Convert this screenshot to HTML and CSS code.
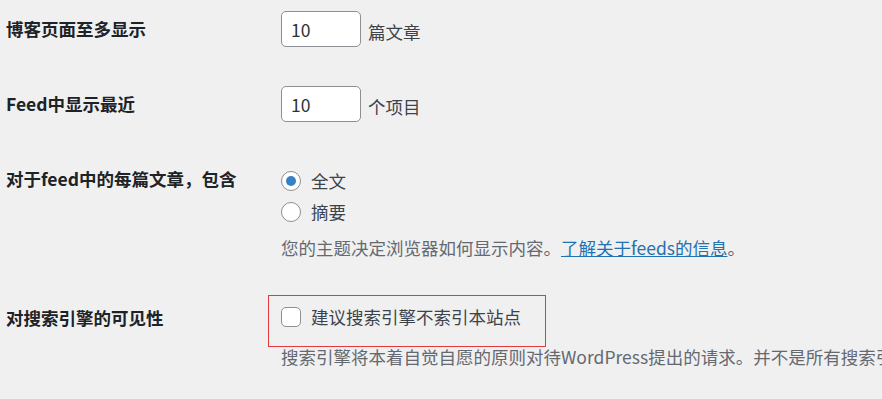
FILE: index.html
```html
<!DOCTYPE html>
<html lang="zh-CN">
<head>
<meta charset="utf-8">
<title>阅读设置</title>
<link rel="stylesheet" href="styles.css">
</head>
<body>
<div class="form">
  <div class="row row-short">
    <div class="th">博客页面至多显示</div>
    <div class="td">
      <div class="inline">
        <input class="num" type="text" value="10">
        <span class="unit">篇文章</span>
      </div>
    </div>
  </div>
  <div class="row row-short">
    <div class="th">Feed中显示最近</div>
    <div class="td">
      <div class="inline">
        <input class="num" type="text" value="10">
        <span class="unit">个项目</span>
      </div>
    </div>
  </div>
  <div class="row row-radios">
    <div class="th">对于feed中的每篇文章，包含</div>
    <div class="td td-radios">
      <label class="choice"><span class="radio checked"></span><span>全文</span></label>
      <label class="choice"><span class="radio"></span><span>摘要</span></label>
      <p class="desc desc-feeds">您的主题决定浏览器如何显示内容。<a href="#" class="link">了解关于feeds的信息</a>。</p>
    </div>
  </div>
  <div class="row row-search">
    <div class="th">对搜索引擎的可见性</div>
    <div class="td td-search">
      <label class="choice choice-box"><span class="checkbox"></span><span>建议搜索引擎不索引本站点</span><span class="highlight"></span></label>
      <p class="desc desc-search">搜索引擎将本着自觉自愿的原则对待WordPress提出的请求。并不是所有搜索引擎都会遵守这类请求。</p>
    </div>
  </div>
</div>
</body>
</html>
```

FILE: styles.css
```css
html, body {
  margin: 0;
  padding: 0;
  background: #f0f0f1;
  overflow: hidden;
}
body {
  font-family: "Noto Sans CJK SC", "Noto Sans", sans-serif;
  font-size: 17.5px;
  color: #3c434a;
  width: 882px;
  height: 399px;
}
.form {
  margin-top: -8px;
  padding-left: 6px;
}
.row {
  display: grid;
  grid-template-columns: 275px 1fr;
}
.row-short { height: 75px; }
.row-radios { height: 139px; }
.th {
  padding-top: 25px;
  font-weight: 700;
  color: #1d2327;
  line-height: 23px;
  white-space: nowrap;
}
.td { padding-top: 19px; white-space: nowrap; }
.inline {
  display: flex;
  align-items: center;
  height: 36px;
}
.num {
  box-sizing: border-box;
  width: 80px;
  height: 36px;
  border: 1px solid #8c8f94;
  border-radius: 5px;
  background: #fff;
  padding: 0 9px;
  font-family: "Noto Sans CJK SC", "Noto Sans", sans-serif;
  font-size: 17.5px;
  color: #2c3338;
  outline: none;
  margin: 0;
}
.unit {
  margin-left: 7px;
  padding-top: 4px;
  line-height: 23px;
}
.td-radios { padding-top: 23px; }
.choice {
  display: flex;
  align-items: center;
  gap: 10px;
  height: 31px;
  line-height: 23px;
  position: relative;
}
.radio {
  box-sizing: border-box;
  width: 20px;
  height: 20px;
  border: 1px solid #8c8f94;
  border-radius: 50%;
  background: #fff;
  display: flex;
  align-items: center;
  justify-content: center;
  flex: none;
}
.radio.checked::after {
  content: "";
  width: 10px;
  height: 10px;
  border-radius: 50%;
  background: #3582c4;
}
.desc {
  margin: 0;
  line-height: 23px;
  color: #646970;
}
.desc-feeds { margin-top: 9px; }
.link {
  color: #2271b1;
  text-decoration: underline;
}
.td-search { padding-top: 20px; }
.checkbox {
  box-sizing: border-box;
  width: 20px;
  height: 20px;
  border: 1px solid #8c8f94;
  border-radius: 5px;
  background: #fff;
  flex: none;
}
.choice-box { color: #3c434a; }
.highlight {
  position: absolute;
  left: -13px;
  top: -6px;
  width: 278px;
  height: 52px;
  box-sizing: border-box;
  border: 1px solid #e5393e;
  pointer-events: none;
}
.desc-search { margin-top: 13px; }
```
